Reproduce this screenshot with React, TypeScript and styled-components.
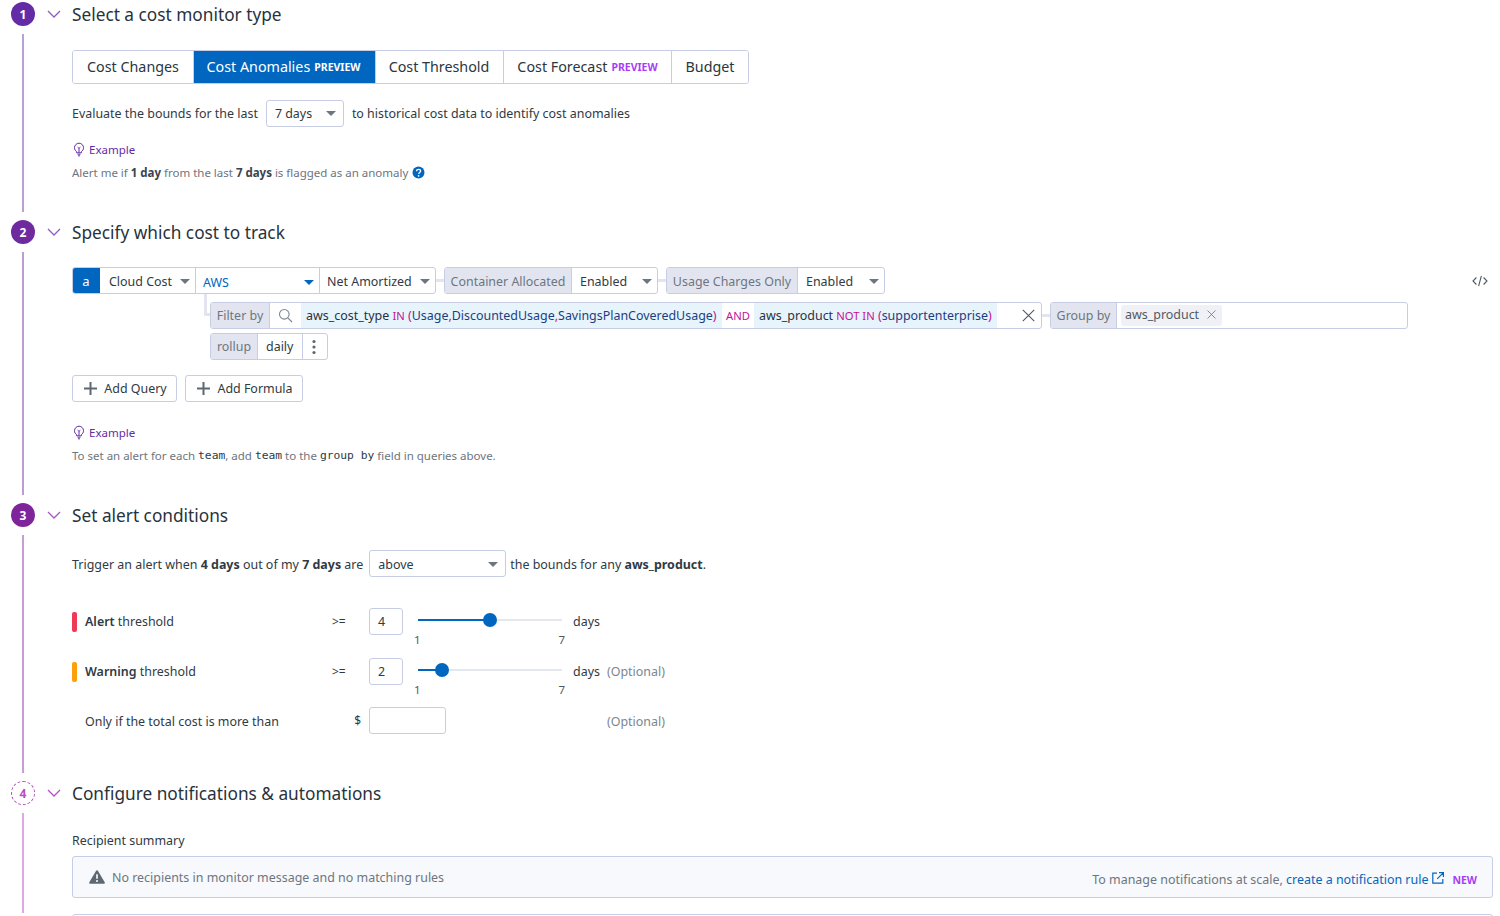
import React from "react";
import styled, { createGlobalStyle } from "styled-components";

const Global = createGlobalStyle`
  html, body { margin: 0; padding: 0; background: #fff; }
  body { font-family: "Noto Sans", "Liberation Sans", sans-serif; color: #28323c; overflow: hidden; height: 916px; }
  * { box-sizing: border-box; }
`;

const Page = styled.div`
  width: 1500px;
  height: 916px;
  padding: 2px 7px 0 11px;
  overflow: hidden;
`;
const Section = styled.section<{ $h: number }>`
  display: flex;
  height: ${(p) => p.$h}px;
`;
const Rail = styled.div`
  width: 24px;
  flex: none;
  display: flex;
  flex-direction: column;
  align-items: center;
`;
const Badge = styled.div<{ $bg: string; $dashed?: boolean }>`
  width: 24px;
  height: 24px;
  flex: none;
  border-radius: 50%;
  display: flex;
  align-items: center;
  justify-content: center;
  font-size: 12px;
  font-weight: 700;
  color: ${(p) => (p.$dashed ? p.$bg : "#fff")};
  background: ${(p) => (p.$dashed ? "#fff" : p.$bg)};
  border: ${(p) => (p.$dashed ? `1px dashed ${p.$bg}` : "none")};
`;
const RailLine = styled.div<{ $c: string }>`
  flex: 1;
  width: 2px;
  margin: 8px 0;
  background: ${(p) => p.$c};
`;
const Main = styled.div`
  flex: 1;
  min-width: 0;
  padding-left: 12px;
`;
const Header = styled.div`
  height: 24px;
  display: flex;
  align-items: center;
  gap: 11px;
`;
const Title = styled.h2`
  margin: 2px 0 0;
  font-size: 17.25px;
  line-height: 24px;
  font-weight: 400;
  color: #28323c;
`;
const Body = styled.div<{ $top: number }>`
  padding-left: 25px;
  margin-top: ${(p) => p.$top}px;
`;

const Tabs = styled.div`
  display: inline-flex;
  height: 34px;
  border: 1px solid #c7cde4;
  border-radius: 3px;
  overflow: hidden;
`;
const Tab = styled.div<{ $active?: boolean; $w: number; $pr?: number }>`
  width: ${(p) => p.$w}px;
  padding: 0 ${(p) => p.$pr ?? 0}px 1px 0;
  display: flex;
  align-items: center;
  justify-content: center;
  gap: 4px;
  font-size: 14.3px;
  white-space: nowrap;
  color: ${(p) => (p.$active ? "#fff" : "#2b3640")};
  background: ${(p) => (p.$active ? "#0066bf" : "#fff")};
  & + & { border-left: 1px solid ${(p) => (p.$active ? "#0066bf" : "#c7cde4")}; }
`;
const Preview = styled.span<{ $active?: boolean }>`
  font-size: 10.5px;
  font-weight: 700;
  letter-spacing: 0;
  color: ${(p) => (p.$active ? "#fff" : "#a93df5")};
`;
const Line = styled.div<{ $top?: number }>`
  display: flex;
  align-items: center;
  height: 27px;
  margin-top: ${(p) => p.$top ?? 0}px;
  font-size: 12.45px;
  color: #2f3a44;
  white-space: pre;
`;
const LowText = styled.span`
  padding-top: 2px;
  b { font-weight: 700; }
`;
const Select = styled.div<{ $w: number; $ml: number; $mr: number; $dy?: number }>`
  width: ${(p) => p.$w}px;
  height: 27px;
  margin: 0 ${(p) => p.$mr}px 0 ${(p) => p.$ml}px;
  padding: ${(p) => p.$dy ?? 0}px 7px 0 8px;
  border: 1px solid #c7cde4;
  border-radius: 3px;
  display: flex;
  align-items: center;
  justify-content: space-between;
  font-size: 12.45px;
  color: #2f3a44;
`;
const Caret = styled.i<{ $blue?: boolean }>`
  display: block;
  flex: none;
  width: 0;
  height: 0;
  border-left: 5px solid transparent;
  border-right: 5px solid transparent;
  border-top: 5px solid ${(p) => (p.$blue ? "#0066bf" : "#6d7680")};
`;
const ExampleRow = styled.div<{ $top: number }>`
  display: flex;
  align-items: center;
  gap: 3px;
  margin-top: ${(p) => p.$top}px;
  height: 16px;
  font-size: 11.5px;
  color: #632ca6;
`;
const Hint = styled.div`
  margin-top: 7px;
  height: 16px;
  display: flex;
  align-items: center;
  font-size: 11.49px;
  color: #6d7680;
  white-space: pre;
  b { font-weight: 700; color: #3a444e; }
  svg { margin-left: 4px; }
`;
const Mono = styled.span`
  font-family: "DejaVu Sans Mono", "Liberation Mono", monospace;
  font-size: 11.3px;
  color: #2f3a44;
`;

const QueryRow = styled.div`
  display: flex;
  align-items: stretch;
  height: 27px;
  font-size: 12.45px;
  position: relative;
`;
const Group = styled.div`
  display: flex;
  height: 27px;
  border: 1px solid #c7cde4;
  border-radius: 3px;
  overflow: hidden;
  background: #fff;
  flex: none;
`;
const LetterCell = styled.div`
  width: 28px;
  margin: -1px 0 -1px -1px;
  background: #0066bf;
  color: #fff;
  display: flex;
  align-items: center;
  justify-content: center;
  font-size: 13px;
`;
const Cell = styled.div<{ $w: number; $blue?: boolean; $pl?: number; $dy?: number }>`
  width: ${(p) => p.$w}px;
  padding: ${(p) => p.$dy ?? 0}px 5px 0 ${(p) => p.$pl ?? 8}px;
  display: flex;
  align-items: center;
  justify-content: space-between;
  color: ${(p) => (p.$blue ? "#0066bf" : "#2f3a44")};
  white-space: nowrap;
  & + & { border-left: 1px solid #c7cde4; }
`;
const GrayCell = styled.div<{ $w: number; $dy?: number }>`
  width: ${(p) => p.$w}px;
  padding-top: ${(p) => p.$dy ?? 0}px;
  flex: none;
  display: flex;
  align-items: center;
  justify-content: center;
  background: #e2e5ef;
  color: #6d7680;
  border-right: 1px solid #c7cde4;
  white-space: nowrap;
`;
const Connector = styled.div`
  width: 8px;
  height: 3px;
  background: #e2e5ef;
  align-self: center;
  flex: none;
`;
const CodeToggle = styled.div`
  margin-left: auto;
  margin-right: 5px;
  display: flex;
  align-items: center;
`;
const SubRows = styled.div`
  margin-left: 138px;
  margin-top: 8px;
  position: relative;
`;
const Elbow = styled.div`
  position: absolute;
  left: -6px;
  top: -8px;
  width: 6px;
  height: 22px;
  border-left: 3px solid #e2e5ef;
  border-bottom: 3px solid #e2e5ef;
`;
const FilterGroup = styled(Group)`
  width: 832px;
  position: relative;
`;
const SearchCell = styled.div`
  width: 31px;
  flex: none;
  display: flex;
  align-items: center;
  justify-content: center;
`;
const Tokens = styled.div`
  display: flex;
  align-items: stretch;
  white-space: nowrap;
`;
const Token = styled.div<{ $w: number }>`
  width: ${(p) => p.$w}px;
  background: #e8f4fb;
  padding-left: 5px;
  line-height: 25px;
  color: #28323c;
  white-space: pre;
`;
const Op = styled.span`color: #c4109a;`;
const Keyword = styled(Op)`font-size: 11.2px;`;
const Val = styled.span`color: #1b3d83;`;
const AndCell = styled.div`
  width: 32px;
  display: flex;
  align-items: center;
  justify-content: center;
  color: #c4109a;
  font-size: 11.2px;
`;
const ClearCell = styled.div`
  margin-left: auto;
  width: 44px;
  padding-left: 25px;
  display: flex;
  align-items: center;
`;
const GroupByBox = styled(Group)`
  width: 358px;
`;
const Chip = styled.div`
  margin: 2px 0 2px 4px;
  width: 101px;
  padding: 0 6px 2px 4px;
  background: #eff1f6;
  border-radius: 3px;
  display: flex;
  align-items: center;
  justify-content: space-between;
  color: #4f5963;
`;
const RollRow = styled(QueryRow)`
  margin-top: 4px;
`;
const Dots = styled.div`
  width: 25px;
  padding-right: 2px;
  border-left: 1px solid #c7cde4;
  display: flex;
  align-items: center;
  justify-content: center;
`;
const ButtonRow = styled.div`
  display: flex;
  gap: 8px;
  margin-top: 15px;
`;
const AddButton = styled.div<{ $w: number }>`
  width: ${(p) => p.$w}px;
  height: 27px;
  padding-left: 2px;
  border: 1px solid #c7cde4;
  border-radius: 3px;
  display: flex;
  align-items: center;
  justify-content: center;
  gap: 7px;
  font-size: 12.45px;
  color: #2f3a44;
`;

const ThresholdRow = styled.div<{ $top: number }>`
  display: flex;
  align-items: center;
  height: 27px;
  margin-top: ${(p) => p.$top}px;
  font-size: 12.45px;
  color: #2f3a44;
  white-space: nowrap;
`;
const LabelCell = styled.div`
  width: 260px;
  display: flex;
  align-items: center;
  gap: 8px;
  b { font-weight: 600; }
`;
const LabelPlain = styled.div`
  padding: 2px 0 0 13px;
`;
const SevBar = styled.i<{ $c: string }>`
  display: block;
  width: 5px;
  height: 20px;
  border-radius: 2px;
  background: ${(p) => p.$c};
`;
const OpCell = styled.div<{ $right?: boolean }>`
  width: 37px;
  font-size: 12px;
  color: #2f3a44;
  text-align: ${(p) => (p.$right ? "right" : "left")};
  padding-right: ${(p) => (p.$right ? "8px" : "0")};
`;
const NumInput = styled.div<{ $w: number }>`
  width: ${(p) => p.$w}px;
  height: 27px;
  border: 1px solid #c7cde4;
  border-radius: 3px;
  padding-left: 8px;
  display: flex;
  align-items: center;
`;
const Slider = styled.div`
  width: 144px;
  margin-left: 15px;
  height: 27px;
  display: flex;
  flex-direction: column;
`;
const Track = styled.div`
  position: relative;
  height: 2px;
  margin-top: 11px;
  background: #e4e6f0;
  flex: none;
`;
const TrackFill = styled.div`
  height: 2px;
  background: #0066bf;
`;
const Thumb = styled.div`
  position: absolute;
  top: -6px;
  width: 14px;
  height: 14px;
  margin-left: -7px;
  border-radius: 50%;
  background: #0066bf;
`;
const Ticks = styled.div`
  display: flex;
  justify-content: space-between;
  margin: 12px -3px 0 -4px;
  font-size: 11.5px;
  line-height: 14px;
  color: #4f5963;
  flex: none;
`;
const Unit = styled.div`
  width: 34px;
  margin-left: 11px;
`;
const Optional = styled.div<{ $ml?: number; $dy?: number }>`
  margin-left: ${(p) => p.$ml ?? 0}px;
  padding-top: ${(p) => p.$dy ?? 0}px;
  color: #7d868f;
`;

const SummaryLabel = styled.div`
  font-size: 12.45px;
  line-height: 18px;
  color: #2f3a44;
`;
const Notice = styled.div`
  margin-top: 6px;
  height: 42px;
  border: 1px solid #c7cde4;
  border-radius: 3px;
  background: #f8f9fc;
  display: flex;
  align-items: center;
  justify-content: space-between;
  padding: 0 15px 0 16px;
  font-size: 12.45px;
  color: #6d7680;
`;
const NoticeLeft = styled.div`
  display: flex;
  align-items: center;
  gap: 7px;
`;
const NoticeRight = styled.div`
  display: flex;
  align-items: center;
  margin-top: 5px;
  white-space: pre;
`;
const LinkText = styled.span`color: #0066bf;`;
const NewTag = styled.span`
  margin-left: 8px;
  font-size: 10.5px;
  font-weight: 700;
  color: #a93df5;
`;
const NextBox = styled.div`
  margin-top: 16px;
  height: 40px;
  border: 1px solid #c7cde4;
  border-radius: 3px;
`;

const Chevron = ({ c }: { c: string }) => (
  <svg width="14" height="8" viewBox="0 0 14 8" fill="none">
    <path d="M1 1l6 6 6-6" stroke={c} strokeWidth="1.3" />
  </svg>
);
const Bulb = () => (
  <svg width="14" height="16" viewBox="0 0 14 16" fill="none" stroke="#632ca6" strokeWidth="1">
    <path d="M4.6 10.6C3.2 9.7 2.5 8.3 2.5 6.7a4.5 4.5 0 0 1 9 0c0 1.6-.7 3-2.1 3.9v1.2H4.6z" />
    <path d="M5.5 13.2h3M6 14.8h2M7 11.5V7.4M5.6 6.2L7 7.4l1.4-1.2" />
  </svg>
);
const Help = () => (
  <svg width="13" height="13" viewBox="0 0 13 13">
    <circle cx="6.5" cy="6.5" r="6" fill="#0066bf" />
    <path d="M4.6 5.2c0-1.1.9-1.8 2-1.8s2 .7 2 1.7c0 1.5-1.9 1.4-1.9 2.8" fill="none" stroke="#fff" strokeWidth="1.3" />
    <circle cx="6.6" cy="9.8" r=".85" fill="#fff" />
  </svg>
);
const Code = () => (
  <svg width="16" height="12" viewBox="0 0 16 12" fill="none" stroke="#4f5963" strokeWidth="1.1">
    <path d="M4.4 2.5L1 6l3.4 3.5M11.6 2.5L15 6l-3.4 3.5M9.4.8L6.6 11.2" />
  </svg>
);
const Search = () => (
  <svg width="15" height="15" viewBox="0 0 15 15" fill="none" stroke="#7d868f" strokeWidth="1.1">
    <circle cx="6.3" cy="6.3" r="4.8" />
    <path d="M9.8 9.8l4.2 4.2" />
  </svg>
);
const Cross = ({ s, c }: { s: number; c: string }) => (
  <svg width={s} height={s} viewBox="0 0 12 12" fill="none" stroke={c} strokeWidth={s > 10 ? 1 : 1.1}>
    <path d="M.7.7l10.6 10.6M11.3.7L.7 11.3" />
  </svg>
);
const Kebab = () => (
  <svg width="4" height="16" viewBox="0 0 4 16" fill="#5e6873">
    <circle cx="2" cy="2.5" r="1.6" />
    <circle cx="2" cy="8" r="1.6" />
    <circle cx="2" cy="13.5" r="1.6" />
  </svg>
);
const Plus = () => (
  <svg width="13" height="13" viewBox="0 0 13 13" fill="none" stroke="#5e6873" strokeWidth="2">
    <path d="M6.5 0v13M0 6.5h13" />
  </svg>
);
const Warn = () => (
  <svg width="16" height="14" viewBox="0 0 16 14">
    <path d="M8 .3c.4 0 .7.2.9.5l6.8 11.5c.4.7-.1 1.5-.9 1.5H1.2c-.8 0-1.3-.8-.9-1.5L7.1.8C7.3.5 7.6.3 8 .3z" fill="#5e6873" />
    <path d="M8 4.2v4.6" stroke="#fff" strokeWidth="1.6" />
    <circle cx="8" cy="10.9" r="1" fill="#fff" />
  </svg>
);
const ExternalIcon = styled.svg`
  margin-left: 4px;
  margin-top: -3px;
`;
const External = () => (
  <ExternalIcon width="12" height="12" viewBox="0 0 12 12" fill="none" stroke="#0066bf" strokeWidth="1.2">
    <path d="M5 1.2H.8v10h10V7M7 .6h4.4V5M11.2.8L5.2 6.8" />
  </ExternalIcon>
);

const Example = ({ top }: { top: number }) => (
  <ExampleRow $top={top}>
    <Bulb />
    Example
  </ExampleRow>
);

const ThresholdSlider = ({ value, min, max }: { value: number; min: number; max: number }) => {
  const pct = `${((value - min) / (max - min)) * 100}%`;
  return (
    <Slider>
      <Track>
        <TrackFill style={{ width: pct }} />
        <Thumb style={{ left: pct }} />
      </Track>
      <Ticks>
        <span>{min}</span>
        <span>{max}</span>
      </Ticks>
    </Slider>
  );
};

export default function App() {
  return (
    <Page>
      <Global />
      <Section $h={218}>
        <Rail>
          <Badge $bg="#632ca6">1</Badge>
          <RailLine $c="#b9a0d8" />
        </Rail>
        <Main>
          <Header>
            <Chevron c="#8a5cc4" />
            <Title>Select a cost monitor type</Title>
          </Header>
          <Body $top={24}>
            <Tabs>
              <Tab $w={120}>Cost Changes</Tab>
              <Tab $w={182} $pr={2} $active>
                Cost Anomalies <Preview $active>PREVIEW</Preview>
              </Tab>
              <Tab $w={128} $pr={1}>Cost Threshold</Tab>
              <Tab $w={168}>
                Cost Forecast <Preview>PREVIEW</Preview>
              </Tab>
              <Tab $w={77}>Budget</Tab>
            </Tabs>
            <Line $top={16}>
              Evaluate the bounds for the last
              <Select $w={78} $ml={8} $mr={8}>
                7 days
                <Caret />
              </Select>
              to historical cost data to identify cost anomalies
            </Line>
            <Example top={14} />
            <Hint>
              Alert me if <b>1 day</b> from the last <b>7 days</b> is flagged as an anomaly
              <Help />
            </Hint>
          </Body>
        </Main>
      </Section>

      <Section $h={283}>
        <Rail>
          <Badge $bg="#6f2a9f">2</Badge>
          <RailLine $c="#bd9bd4" />
        </Rail>
        <Main>
          <Header>
            <Chevron c="#965ac0" />
            <Title>Specify which cost to track</Title>
          </Header>
          <Body $top={23}>
            <QueryRow>
              <Group>
                <LetterCell>a</LetterCell>
                <Cell $w={95} $pl={9} $dy={2}>
                  Cloud Cost
                  <Caret />
                </Cell>
                <Cell $w={124} $blue $pl={7} $dy={4}>
                  AWS
                  <Caret $blue />
                </Cell>
                <Cell $w={116} $pl={7} $dy={2}>
                  Net Amortized
                  <Caret />
                </Cell>
              </Group>
              <Connector />
              <Group>
                <GrayCell $w={127} $dy={2}>Container Allocated</GrayCell>
                <Cell $w={85} $dy={2}>
                  Enabled
                  <Caret />
                </Cell>
              </Group>
              <Connector />
              <Group>
                <GrayCell $w={131} $dy={2}>Usage Charges Only</GrayCell>
                <Cell $w={86} $dy={2}>
                  Enabled
                  <Caret />
                </Cell>
              </Group>
              <CodeToggle>
                <Code />
              </CodeToggle>
            </QueryRow>
            <SubRows>
              <Elbow />
              <QueryRow>
                <FilterGroup>
                  <GrayCell $w={59}>Filter by</GrayCell>
                  <SearchCell>
                    <Search />
                  </SearchCell>
                  <Tokens>
                    <Token $w={421}>
                      aws_cost_type <Keyword>IN</Keyword> <Op>(</Op><Val>Usage</Val><Op>,</Op><Val>DiscountedUsage</Val><Op>,</Op><Val>SavingsPlanCoveredUsage</Val><Op>)</Op>
                    </Token>
                    <AndCell>AND</AndCell>
                    <Token $w={243}>
                      aws_product <Keyword>NOT IN</Keyword> <Op>(</Op><Val>supportenterprise</Val><Op>)</Op>
                    </Token>
                  </Tokens>
                  <ClearCell>
                    <Cross s={13} c="#4f5963" />
                  </ClearCell>
                </FilterGroup>
                <Connector />
                <GroupByBox>
                  <GrayCell $w={66}>Group by</GrayCell>
                  <Chip>
                    aws_product
                    <Cross s={9} c="#6d7680" />
                  </Chip>
                </GroupByBox>
              </QueryRow>
              <RollRow>
                <Group>
                  <GrayCell $w={47}>rollup</GrayCell>
                  <Cell $w={44}>daily</Cell>
                  <Dots>
                    <Kebab />
                  </Dots>
                </Group>
              </RollRow>
            </SubRows>
            <ButtonRow>
              <AddButton $w={105}>
                <Plus />
                Add Query
              </AddButton>
              <AddButton $w={118}>
                <Plus />
                Add Formula
              </AddButton>
            </ButtonRow>
            <Example top={22} />
            <Hint>
              To set an alert for each <Mono>team</Mono>, add <Mono>team</Mono> to the <Mono>group by</Mono> field in queries above.
            </Hint>
          </Body>
        </Main>
      </Section>

      <Section $h={278}>
        <Rail>
          <Badge $bg="#7f259b">3</Badge>
          <RailLine $c="#c79dd5" />
        </Rail>
        <Main>
          <Header>
            <Chevron c="#a45bbd" />
            <Title>Set alert conditions</Title>
          </Header>
          <Body $top={23}>
            <Line>
              <LowText>Trigger an alert when <b>4 days</b> out of my <b>7 days</b> are</LowText>
              <Select $w={137} $ml={6} $mr={4} $dy={2}>
                above
                <Caret />
              </Select>
              <LowText>the bounds for any <b>aws_product</b>.</LowText>
            </Line>
            <ThresholdRow $top={31}>
              <LabelCell>
                <SevBar $c="#ee3a57" />
                <span><b>Alert</b> threshold</span>
              </LabelCell>
              <OpCell>&gt;=</OpCell>
              <NumInput $w={34}>4</NumInput>
              <ThresholdSlider value={4} min={1} max={7} />
              <Unit>days</Unit>
            </ThresholdRow>
            <ThresholdRow $top={23}>
              <LabelCell>
                <SevBar $c="#ff9f0a" />
                <span><b>Warning</b> threshold</span>
              </LabelCell>
              <OpCell>&gt;=</OpCell>
              <NumInput $w={34}>2</NumInput>
              <ThresholdSlider value={2} min={1} max={7} />
              <Unit>days</Unit>
              <Optional>(Optional)</Optional>
            </ThresholdRow>
            <ThresholdRow $top={22}>
              <LabelCell>
                <LabelPlain>Only if the total cost is more than</LabelPlain>
              </LabelCell>
              <OpCell $right>$</OpCell>
              <NumInput $w={77} />
              <Optional $ml={161} $dy={2}>(Optional)</Optional>
            </ThresholdRow>
          </Body>
        </Main>
      </Section>

      <Section $h={140}>
        <Rail>
          <Badge $bg="#b551c4" $dashed>4</Badge>
          <RailLine $c="#dfa9e0" />
        </Rail>
        <Main>
          <Header>
            <Chevron c="#b551c4" />
            <Title>Configure notifications &amp; automations</Title>
          </Header>
          <Body $top={27}>
            <SummaryLabel>Recipient summary</SummaryLabel>
            <Notice>
              <NoticeLeft>
                <Warn />
                No recipients in monitor message and no matching rules
              </NoticeLeft>
              <NoticeRight>
                To manage notifications at scale, <LinkText>create a notification rule</LinkText>
                <External />
                <NewTag>NEW</NewTag>
              </NoticeRight>
            </Notice>
            <NextBox />
          </Body>
        </Main>
      </Section>
    </Page>
  );
}
